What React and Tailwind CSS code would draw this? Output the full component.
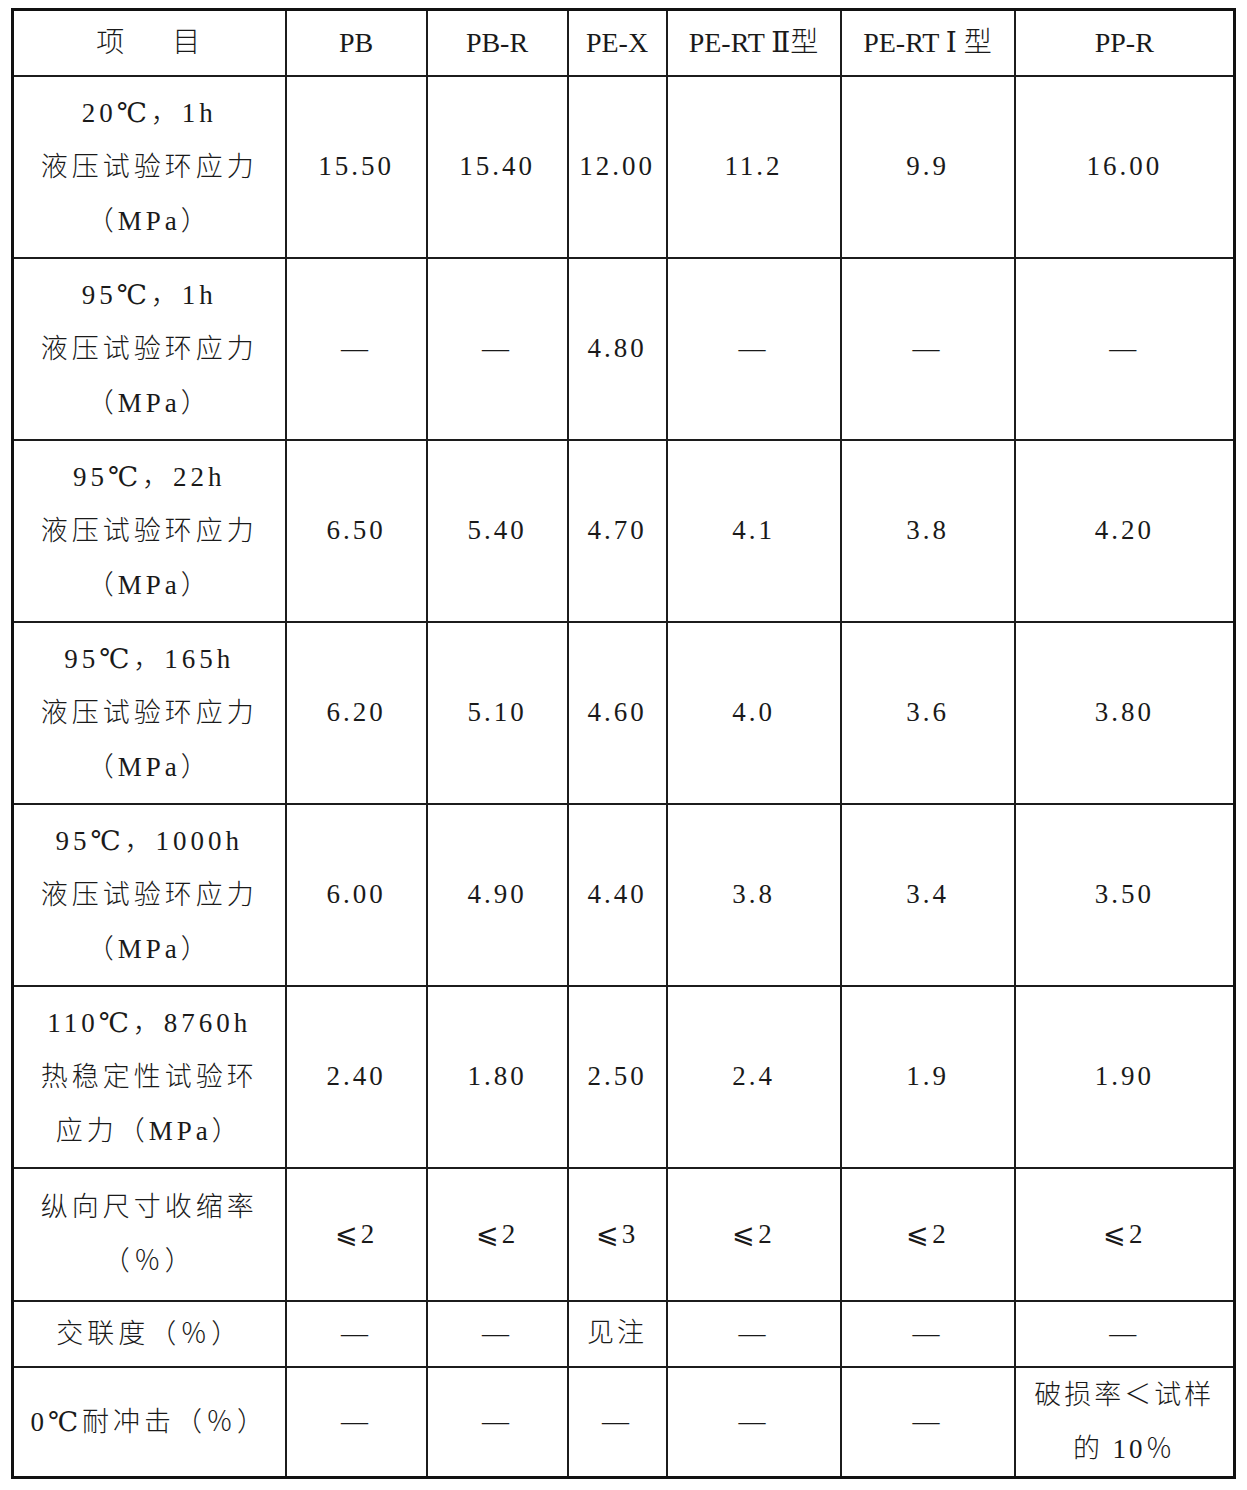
import React from 'react';

const cols = [273, 141, 141, 99, 174, 174, 220];

const headers = ['项\u3000目', 'PB', 'PB-R', 'PE-X', 'PE-RT Ⅱ型', 'PE-RT Ⅰ 型', 'PP-R'];

const rows = [
  { h: 182, label: ['20℃，1h', '液压试验环应力', '（MPa）'], vals: ['15.50', '15.40', '12.00', '11.2', '9.9', '16.00'] },
  { h: 182, label: ['95℃，1h', '液压试验环应力', '（MPa）'], vals: ['—', '—', '4.80', '—', '—', '—'] },
  { h: 182, label: ['95℃，22h', '液压试验环应力', '（MPa）'], vals: ['6.50', '5.40', '4.70', '4.1', '3.8', '4.20'] },
  { h: 182, label: ['95℃，165h', '液压试验环应力', '（MPa）'], vals: ['6.20', '5.10', '4.60', '4.0', '3.6', '3.80'] },
  { h: 182, label: ['95℃，1000h', '液压试验环应力', '（MPa）'], vals: ['6.00', '4.90', '4.40', '3.8', '3.4', '3.50'] },
  { h: 182, label: ['110℃，8760h', '热稳定性试验环', '应力（MPa）'], vals: ['2.40', '1.80', '2.50', '2.4', '1.9', '1.90'] },
  { h: 133, label: ['纵向尺寸收缩率', '（％）'], vals: ['⩽2', '⩽2', '⩽3', '⩽2', '⩽2', '⩽2'] },
  { h: 66, label: ['交联度（％）'], vals: ['—', '—', '见注', '—', '—', '—'] },
  { h: 110, label: ['0℃耐冲击（％）'], vals: ['—', '—', '—', '—', '—', ['破损率＜试样', '的 10％']] },
];

const font = { fontFamily: '"Liberation Serif", "DejaVu Serif", "Noto Sans CJK SC", serif' };

const Cell = ({ children, className = '' }) => (
  <td className={`border-2 border-[#1c1c1c] text-center align-middle p-0 ${className}`}>{children}</td>
);

const Lines = ({ lines }) => (
  <div className="flex flex-col items-center leading-[54px]">
    {lines.map((l, i) => (
      <span key={i} className="whitespace-nowrap">{l}</span>
    ))}
  </div>
);

export default function App() {
  return (
    <div className="bg-white w-[1247px] h-[1490px] pt-[8px] pl-[11px] text-[#1a1a1a] font-light" style={font}>
      <table className="table-fixed border-collapse border-[3px] border-[#111] w-[1224px]">
        <colgroup>
          {cols.map((w, i) => (
            <col key={i} style={{ width: w }} />
          ))}
        </colgroup>
        <tbody>
          <tr className="h-[66px]">
            {headers.map((h, i) => (
              <Cell key={i} className={`text-[28px] whitespace-nowrap ${i === 0 ? 'tracking-[10px] pl-[8px]' : ''}`}>{h}</Cell>
            ))}
          </tr>
          {rows.map((r, ri) => (
            <tr key={ri} style={{ height: r.h }}>
              <Cell className="text-[27px] tracking-[4px]">
                <Lines lines={r.label} />
              </Cell>
              {r.vals.map((v, vi) => (
                <Cell key={vi} className="text-[27px] tracking-[3px]">
                  {Array.isArray(v) ? <Lines lines={v} /> : v}
                </Cell>
              ))}
            </tr>
          ))}
        </tbody>
      </table>
    </div>
  );
}
